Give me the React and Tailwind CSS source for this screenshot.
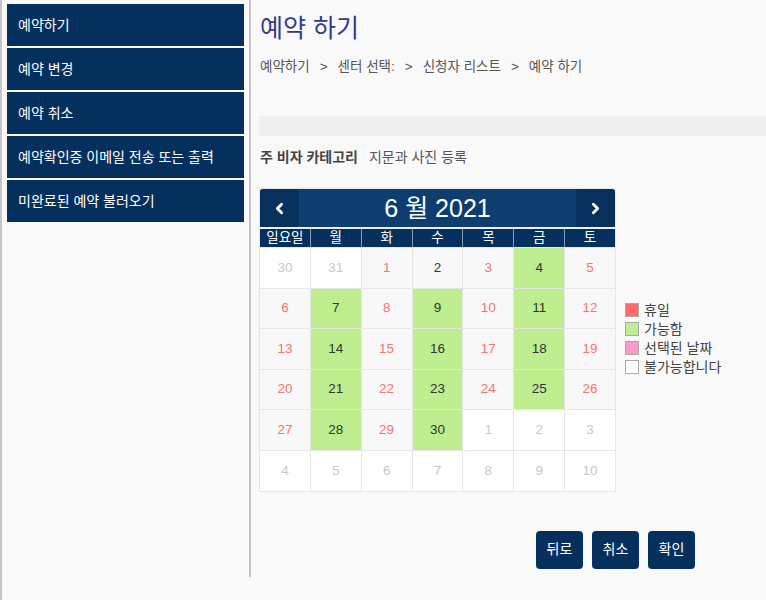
import { ChevronLeft, ChevronRight } from "lucide-react";

const menu = [
  "예약하기",
  "예약 변경",
  "예약 취소",
  "예약확인증 이메일 전송 또는 출력",
  "미완료된 예약 불러오기",
];

const weekdays = ["일요일", "월", "화", "수", "목", "금", "토"];

// type: o = other month, h = holiday, a = available, n = plain
const weeks = [
  [[30, "o"], [31, "o"], [1, "h"], [2, "n"], [3, "h"], [4, "a"], [5, "h"]],
  [[6, "h"], [7, "a"], [8, "h"], [9, "a"], [10, "h"], [11, "a"], [12, "h"]],
  [[13, "h"], [14, "a"], [15, "h"], [16, "a"], [17, "h"], [18, "a"], [19, "h"]],
  [[20, "h"], [21, "a"], [22, "h"], [23, "a"], [24, "h"], [25, "a"], [26, "h"]],
  [[27, "h"], [28, "a"], [29, "h"], [30, "a"], [1, "o"], [2, "o"], [3, "o"]],
  [[4, "o"], [5, "o"], [6, "o"], [7, "o"], [8, "o"], [9, "o"], [10, "o"]],
];

const cellStyle = {
  o: "bg-white text-[#c8c8c8]",
  h: "bg-[#f8f8f8] text-[#ff7070]",
  a: "bg-[#bfee90] text-[#333]",
  n: "bg-[#f8f8f8] text-[#333]",
};

const legend = [
  ["휴일", "bg-[#ff6b6b]"],
  ["가능함", "bg-[#bfee90]"],
  ["선택된 날짜", "bg-[#ff99cc]"],
  ["불가능합니다", "bg-white"],
];

function Calendar() {
  return (
    <div className="w-[357px] border border-[#e6e6e6] bg-[#eee]">
      <div className="flex items-center justify-between h-[38px] bg-[#0e3d6f] rounded-t-[3px]">
        <button className="w-[39px] h-[38px] bg-[#08305c] rounded-[4px] flex items-center justify-center text-white">
          <ChevronLeft size={17} strokeWidth={4} />
        </button>
        <span className="text-white text-[25px] leading-none">6 월 2021</span>
        <button className="w-[39px] h-[38px] bg-[#08305c] rounded-[4px] flex items-center justify-center text-white">
          <ChevronRight size={17} strokeWidth={4} />
        </button>
      </div>
      <div className="grid grid-cols-7 gap-x-[1px] bg-[#8a9bb0] mt-[2px]">
        {weekdays.map((d) => (
          <div key={d} className="h-[18px] bg-[#05305d] text-white text-[13.5px] leading-[18px] text-center">
            {d}
          </div>
        ))}
      </div>
      <div className="grid grid-cols-7 gap-[1px] bg-[#e6e6e6] border-t border-[#e6e6e6]">
        {weeks.flat().map(([n, t], i) => (
          <div
            key={i}
            className={`h-[39.6px] flex items-center justify-center text-[13.5px] ${cellStyle[t]}`}
          >
            {n}
          </div>
        ))}
      </div>
    </div>
  );
}

export default function App() {
  return (
    <div
      className="flex min-h-[600px] bg-[#f9f9f9] border-l-2 border-[#c9c3c3] text-[#333]"
      style={{ fontFamily: '"Liberation Sans", "Noto Sans CJK KR", sans-serif' }}
    >
      <div className="w-[249px] shrink-0 h-[577px] border-r-2 border-[#c9c3c3] pl-[5px] pr-[5px] pt-[4px]">
        <div className="flex flex-col gap-[2px]">
          {menu.map((m) => (
            <div key={m} className="h-[42px] bg-[#05305d] text-white text-[14px] flex items-center pl-[11px]">
              {m}
            </div>
          ))}
        </div>
      </div>

      <div className="flex-1 pl-[8px] pt-[13px]">
        <h1 className="text-[25px] leading-[30px] text-[#38388a] pl-[1px]">예약 하기</h1>
        <div className="mt-[14px] text-[13.5px] leading-[20px] text-[#555] pl-[1px] flex gap-[10px]">
          <span>예약하기</span>
          <span>&gt;</span>
          <span>센터 선택:</span>
          <span>&gt;</span>
          <span>신청자 리스트</span>
          <span>&gt;</span>
          <span>예약 하기</span>
        </div>
        <div className="mt-[39px] h-[20px] bg-[#efefef]" />
        <div className="mt-[11px] pl-[1px] text-[14px] leading-[20px] flex gap-[11px]">
          <span className="font-bold text-[#444]">주 비자 카테고리</span>
          <span className="text-[#555]">지문과 사진 등록</span>
        </div>

        <div className="mt-[21px] flex">
          <Calendar />
          <div className="ml-[9px] mt-[114px] flex flex-col gap-[3px] text-[14px] text-[#444]">
            {legend.map(([label, color]) => (
              <div key={label} className="flex items-center gap-[5px] h-[16px]">
                <span className={`w-[14px] h-[14px] border border-[#aaa] ${color}`} />
                <span>{label}</span>
              </div>
            ))}
          </div>
        </div>

        <div className="mt-[39px] ml-[277px] flex gap-[9px]">
          {["뒤로", "취소", "확인"].map((b) => (
            <button key={b} className="w-[47px] h-[38px] rounded-[4px] bg-[#05305d] text-white text-[14px]">
              {b}
            </button>
          ))}
        </div>
      </div>
    </div>
  );
}
